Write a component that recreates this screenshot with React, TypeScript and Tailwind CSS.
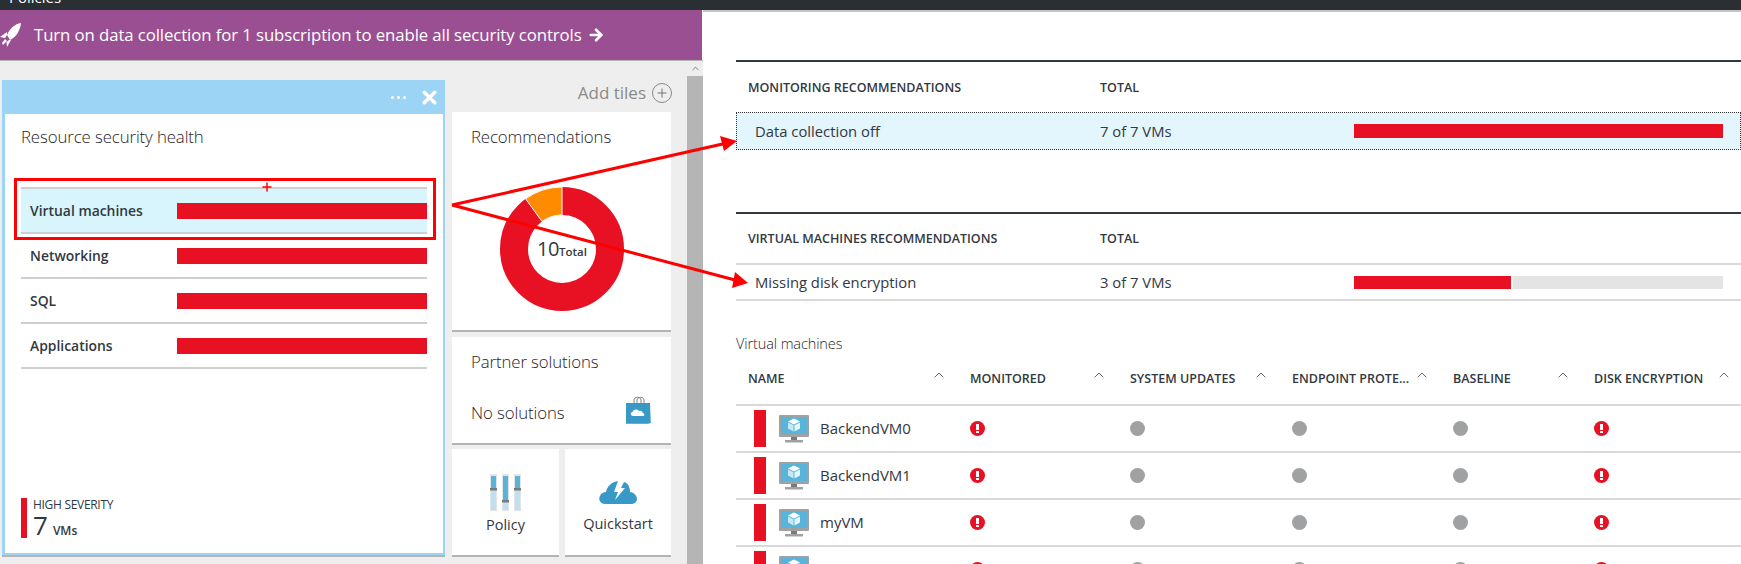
import { ArrowRight, ChevronUp, Plus, X } from "lucide-react"

const categories = ["Virtual machines", "Networking", "SQL", "Applications"]
const vms = ["BackendVM0", "BackendVM1", "myVM", ""]

function Rocket() {
    return (
        <svg width="21" height="24" viewBox="0 0 21 24" className="shrink-0" fill="#fff">
            <path d="M21 0C15 1 10 5 7 12L10 17C16 14 20 8 21 0Z" />
            <path d="M7 9L0 14L5 15L7 12Z" />
            <path d="M11 17L7 24L6.5 19L9 17Z" />
            <path d="M5 16L7 18L3 22L2 20Z" />
        </svg>
    )
}

function VmIcon() {
    return (
        <svg width="30" height="28" viewBox="0 0 30 28" className="shrink-0">
            <rect x="0" y="0" width="30" height="22" rx="1" fill="#a0a1a2" />
            <rect x="2" y="2" width="26" height="17" fill="#59b4d9" />
            <path d="M15 3.5L21 6.5L15 9.5L9 6.5Z" fill="#ffffff" />
            <path d="M9 7.5L14.5 10.2V16.5L9 13.5Z" fill="#c8e8f5" />
            <path d="M21 7.5L15.5 10.2V16.5L21 13.5Z" fill="#e6f5fb" />
            <rect x="12" y="22" width="6" height="3" fill="#7a7a7a" />
            <rect x="6" y="25" width="18" height="2.5" fill="#a0a1a2" />
        </svg>
    )
}

function BagIcon() {
    return (
        <svg width="25" height="28" viewBox="0 0 25 28">
            <path d="M8 7V4C8 0.5 15 0.5 15 4V7M11 7V4C11 0.5 18 0.5 18 4V7" fill="none" stroke="#808080" strokeWidth="1" />
            <path d="M0 7H24V27H0Z" fill="#3999c6" />
            <path d="M24 7L25 27L22 28H0V27H24Z" fill="#59b4d9" />
            <path d="M7 20C4.5 20 4 16.5 6.5 16C7 13 11.5 12.5 13 15C15 14 17 15.5 16.5 17C19 17 19 20 17 20Z" fill="#fff" />
        </svg>
    )
}

function PolicyIcon() {
    const sliders = [{ x: 0, knob: 14 }, { x: 12, knob: 26 }, { x: 24, knob: 14 }]
    return (
        <svg width="31" height="37" viewBox="0 0 31 37">
            {sliders.map(s => (
                <g key={s.x}>
                    <rect x={s.x} y="0" width="7" height="37" fill="#e4e4e4" />
                    <rect x={s.x + 1} y="2" width="5" height="34" fill="#bee0f0" />
                    <rect x={s.x + 1} y="2" width={5} height={s.knob - 2} fill="#59b4d9" />
                    <rect x={s.x} y={s.knob} width="7" height="2.5" fill="#7a7a7a" />
                </g>
            ))}
        </svg>
    )
}

function CloudBolt() {
    return (
        <svg width="38" height="24" viewBox="0 0 38 24">
            <path d="M6 24C1 24 -1 19 1 16C2 13 5 12 7 12C8 6 13 2 19 1L15 12L19 12L16 20L26 8L22 8L25 2C29 3 31 7 31 12C35 12 38 16 38 19C38 22 35 24 32 24Z" fill="#3999c6" />
        </svg>
    )
}

function StatusDot({ bad }: { bad: boolean }) {
    if (!bad) return <div className="w-[15px] h-[15px] rounded-full bg-[#a0a1a2]" />
    return (
        <div className="w-[15px] h-[15px] rounded-full bg-[#e81123] flex flex-col items-center justify-center gap-[1px]">
            <div className="w-[2.5px] h-[6px] bg-white" />
            <div className="w-[2.5px] h-[2px] bg-white" />
        </div>
    )
}

function Tile({ children, className }: { children: React.ReactNode, className: string }) {
    return <div className={`bg-white shadow-[0_2px_0_#b4b4b4] ${className}`}>{children}</div>
}

function Annotations() {
    return (
        <>
            <div className="absolute left-[14px] top-[178px] w-[422px] h-[62px] border-[3px] border-[#ff0000]" />
            <div className="absolute left-[260px] top-[180px] text-[#ff0000]">
                <Plus size={14} strokeWidth={2.5} />
            </div>
            <svg width="1741" height="564" className="absolute left-0 top-0 pointer-events-none">
                <path d="M452 205L727 143M452 205L735 280" fill="none" stroke="#ff0000" strokeWidth="3" />
                <path d="M737 141L720 136L724 151Z" fill="#ff0000" />
                <path d="M748 283L735 272L732 288Z" fill="#ff0000" />
            </svg>
        </>
    )
}

export default function App() {
    return (
        <div className="relative w-[1741px] h-[564px] overflow-hidden bg-white font-['Open_Sans',sans-serif] text-[#32383f]">
            <div className="h-[10px] bg-[#2a2f33] overflow-hidden pl-[9px]">
                <p className="text-[15px] leading-[20px] text-white -mt-[13px]">Policies</p>
            </div>
            <div className="flex h-[554px]">
                <div className="w-[703px] shrink-0 flex flex-col">
                    <div className="w-[702px] h-[50px] shrink-0 bg-[#9a4f93] flex items-center text-white">
                        <Rocket />
                        <p className="ml-[13px] text-[16.8px] tracking-[-0.1px]">Turn on data collection for 1 subscription to enable all security controls</p>
                        <ArrowRight size={18} strokeWidth={3.5} className="ml-[5px]" />
                    </div>
                    <div className="flex-1 flex border-t border-[#b5b5b5] bg-[#eeeeee]">
                        <div className="w-[687px] shrink-0 flex gap-[7px] pl-[2px] pt-[19px]">
                            <div className="w-[443px] h-[475px] bg-[#9bd4f4] shadow-[0_2px_0_#b4b4b4] flex flex-col pl-[3px] pr-[2px] pb-[2px]">
                                <div className="h-[34px] shrink-0 flex items-center justify-end text-white pr-[3px] gap-[13px]">
                                    <div className="flex gap-[3px]">
                                        <div className="w-[3px] h-[3px] rounded-full bg-white" />
                                        <div className="w-[3px] h-[3px] rounded-full bg-white" />
                                        <div className="w-[3px] h-[3px] rounded-full bg-white" />
                                    </div>
                                    <X size={21} strokeWidth={4} />
                                </div>
                                <div className="flex-1 bg-white px-[16px] flex flex-col">
                                    <p className="text-[16.8px] leading-[22px] mt-[12px] tracking-[-0.1px] font-light text-[#1f2328]">Resource security health</p>
                                    <div className="mt-[39px] border-t-2 border-[#cfcfcf]">
                                        {categories.map((c, i) => (
                                            <div key={c} className={`h-[45px] flex items-center border-b-2 border-[#cfcfcf] pl-[9px] ${i == 0 ? "bg-[#d8f4fc]" : ""}`}>
                                                <p className="w-[147px] text-[13.9px] font-semibold mt-[2px]">{c}</p>
                                                <div className="flex-1 h-[16px] bg-[#e81123]" />
                                            </div>
                                        ))}
                                    </div>
                                    <div className="mt-auto mb-[15px] flex gap-[6px] h-[40px]">
                                        <div className="w-[6px] bg-[#e81123]" />
                                        <div className="flex flex-col">
                                            <p className="text-[12px] leading-[14px] tracking-[-0.3px]">HIGH SEVERITY</p>
                                            <p className="leading-[26px]">
                                                <span className="text-[26px]">7</span>
                                                <span className="text-[12px] font-semibold ml-[5px]">VMs</span>
                                            </p>
                                        </div>
                                    </div>
                                </div>
                            </div>
                            <div className="w-[219px] flex flex-col">
                                <div className="h-[32px] pb-[6px] flex items-center justify-end text-[#8a8a8a] gap-[6px] -mr-[1px]">
                                    <p className="text-[17px]">Add tiles</p>
                                    <div className="w-[20px] h-[20px] rounded-full border border-[#8a8a8a] flex items-center justify-center text-[#666]">
                                        <Plus size={14} strokeWidth={1.5} />
                                    </div>
                                </div>
                                <Tile className="h-[218px] pl-[19px] pt-[14px] flex flex-col">
                                    <p className="text-[16.8px] leading-[22px] tracking-[-0.1px] font-light text-[#1f2328]">Recommendations</p>
                                    <div className="relative mt-[39px] w-[124px] h-[124px] ml-[29px]">
                                        <svg width="124" height="124" viewBox="0 0 124 124">
                                            <circle cx="62" cy="62" r="48" fill="none" stroke="#e81123" strokeWidth="28" />
                                            <path d="M62 0V28A34 34 0 0 0 42 34.5L25.6 11.8A62 62 0 0 1 62 0Z" fill="#ff8c00" stroke="#ffffff" strokeWidth="1" />
                                        </svg>
                                        <div className="absolute inset-0 flex items-baseline justify-center pt-[49px]">
                                            <span className="text-[20px] leading-[26px] tracking-[-0.5px]">10</span>
                                            <span className="text-[11.5px] font-semibold">Total</span>
                                        </div>
                                    </div>
                                </Tile>
                                <Tile className="h-[106px] mt-[7px] pl-[19px] pr-[20px] pt-[14px] flex flex-col">
                                    <p className="text-[16.8px] leading-[22px] tracking-[-0.1px] font-light text-[#1f2328]">Partner solutions</p>
                                    <div className="flex items-center justify-between mt-[23px]">
                                        <p className="text-[16.8px] leading-[22px] tracking-[-0.1px] mt-[6px] font-light text-[#1f2328]">No solutions</p>
                                        <BagIcon />
                                    </div>
                                </Tile>
                                <div className="flex gap-[6px] mt-[6px]">
                                    <Tile className="w-[107px] h-[106px] flex flex-col items-center pt-[25px]">
                                        <PolicyIcon />
                                        <p className="text-[14.5px] mt-[3px]">Policy</p>
                                    </Tile>
                                    <Tile className="w-[106px] h-[106px] flex flex-col items-center pt-[31px]">
                                        <CloudBolt />
                                        <p className="text-[14.5px] mt-[9px]">Quickstart</p>
                                    </Tile>
                                </div>
                            </div>
                        </div>
                        <div className="flex-1 flex flex-col">
                            <div className="h-[15px] flex items-center justify-center text-[#777]">
                                <ChevronUp size={11} />
                            </div>
                            <div className="flex-1 bg-[#b5b5b5]" />
                        </div>
                    </div>
                </div>
                <div className="flex-1 border-t-2 border-[#c4c4c4] pl-[33px] pt-[48px]">
                    <div className="border-t-2 border-[#32383f] h-[52px] pt-[2px] flex items-center text-[12.5px] font-semibold pl-[12px]">
                        <p className="w-[352px]">MONITORING RECOMMENDATIONS</p>
                        <p>TOTAL</p>
                    </div>
                    <div className="h-[38px] flex items-center bg-[#e3f5fd] border border-dotted border-[#333] text-[14.8px] pl-[18px]">
                        <p className="w-[345px]">Data collection off</p>
                        <p className="w-[254px]">7 of 7 VMs</p>
                        <div className="w-[369px] h-[14px] bg-[#e81123]" />
                    </div>
                    <div className="mt-[62px] border-t-2 border-[#32383f] h-[51px] pt-[2px] flex items-center text-[12.5px] font-semibold pl-[12px]">
                        <p className="w-[352px]">VIRTUAL MACHINES RECOMMENDATIONS</p>
                        <p>TOTAL</p>
                    </div>
                    <div className="h-[38px] flex items-center border-y-2 border-[#d9d9d9] text-[14.8px] pl-[19px]">
                        <p className="w-[345px]">Missing disk encryption</p>
                        <p className="w-[254px]">3 of 7 VMs</p>
                        <div className="w-[369px] h-[13px] flex gap-[2px] bg-white">
                            <div className="w-[157px] bg-[#e81123]" />
                            <div className="flex-1 bg-[#e4e4e4]" />
                        </div>
                    </div>
                    <p className="mt-[33px] text-[14.5px] leading-[20px] tracking-[-0.1px] font-light text-[#1f2328]">Virtual machines</p>
                    <div className="mt-[10px] h-[42px] pb-[10px] border-b-2 border-[#d9d9d9] grid grid-cols-[234px_160px_162px_161px_141px_1fr] items-center text-[12.5px] font-semibold">
                        {["NAME", "MONITORED", "SYSTEM UPDATES", "ENDPOINT PROTE...", "BASELINE", "DISK ENCRYPTION"].map((h, i) => (
                            <div key={h} className={`flex items-center justify-between ${i == 0 ? "pl-[12px]" : ""} ${i == 5 ? "pr-[9px]" : "pr-[23px]"}`}>
                                <p className="whitespace-nowrap">{h}</p>
                                <ChevronUp size={16} strokeWidth={1.2} className="-mt-[8px] shrink-0 text-[#444]" />
                            </div>
                        ))}
                    </div>
                    {vms.map(name => (
                        <div key={name} className="h-[47px] border-b-2 border-[#d9d9d9] grid grid-cols-[234px_160px_162px_161px_141px_1fr] items-center">
                            <div className="flex items-center pl-[18px] gap-[13px]">
                                <div className="w-[12px] h-[37px] bg-[#e81123]" />
                                <VmIcon />
                                <p className="text-[15px] -ml-[2px]">{name}</p>
                            </div>
                            <StatusDot bad={true} />
                            <StatusDot bad={false} />
                            <StatusDot bad={false} />
                            <StatusDot bad={false} />
                            <StatusDot bad={true} />
                        </div>
                    ))}
                </div>
            </div>
            <Annotations />
        </div>
    )
}
